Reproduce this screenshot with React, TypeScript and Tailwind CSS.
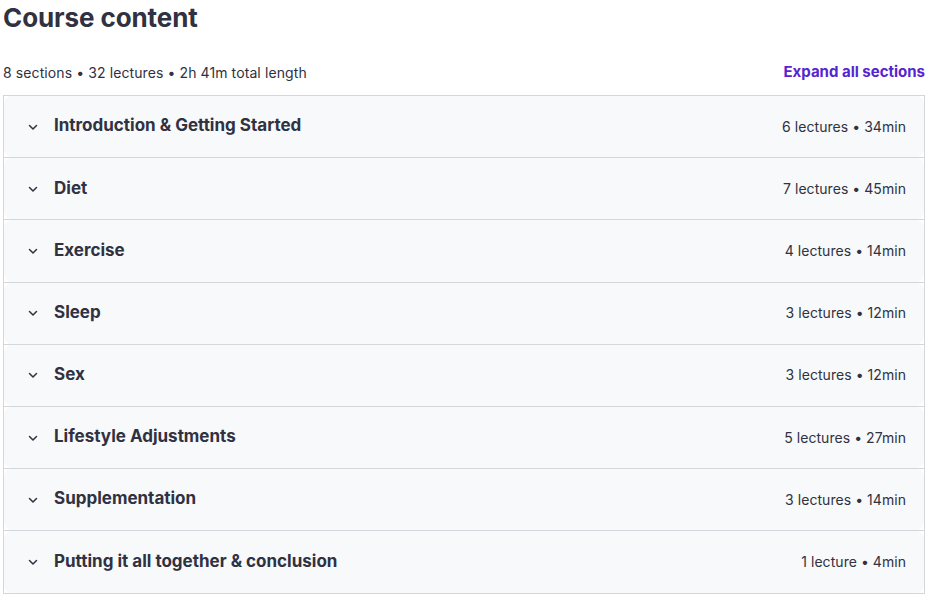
import React from "react";

const sections = [
  { title: "Introduction & Getting Started", meta: "6 lectures • 34min" },
  { title: "Diet", meta: "7 lectures • 45min" },
  { title: "Exercise", meta: "4 lectures • 14min" },
  { title: "Sleep", meta: "3 lectures • 12min" },
  { title: "Sex", meta: "3 lectures • 12min" },
  { title: "Lifestyle Adjustments", meta: "5 lectures • 27min" },
  { title: "Supplementation", meta: "3 lectures • 14min" },
  { title: "Putting it all together & conclusion", meta: "1 lecture • 4min" },
];

const Chevron = () => (
  <svg width="12" height="12" viewBox="0 0 12 12" fill="none" className="shrink-0">
    <path d="M2.5 4.5L6 8L9.5 4.5" stroke="#303141" strokeWidth="1.5" strokeLinecap="round" strokeLinejoin="round" />
  </svg>
);

export default function App() {
  return (
    <div className="w-[928px] h-[594px] bg-white px-[3px] text-[#303141] font-['Inter','Noto_Sans',sans-serif] overflow-hidden">
      <h2 className="text-[26px] leading-[34px] font-bold tracking-[-0.1px] pt-px">Course content</h2>
      <div className="flex items-center justify-between mt-[25px] h-[24px]">
        <span className="text-[14px] tracking-[0.1px]">8 sections • 32 lectures • 2h 41m total length</span>
        <button className="text-[15px] font-bold text-[#5624d0] mt-px">Expand all sections</button>
      </div>
      <div className="mt-[11px] border border-[#d1d7dc] border-b-0 w-[922px] bg-white">
        {sections.map((s) => (
          <div key={s.title} className="border-b border-[#d1d7dc] bg-white">
            <div className="h-[61.2px] bg-[#f7f9fa] rounded-lg flex items-center pl-[23px] pr-[18px]">
              <Chevron />
              <span className="ml-[15px] text-[17px] font-bold -mt-px">{s.title}</span>
              <span className="ml-auto text-[14px] tracking-[0.05px] -mt-px">{s.meta}</span>
            </div>
          </div>
        ))}
      </div>
    </div>
  );
}
